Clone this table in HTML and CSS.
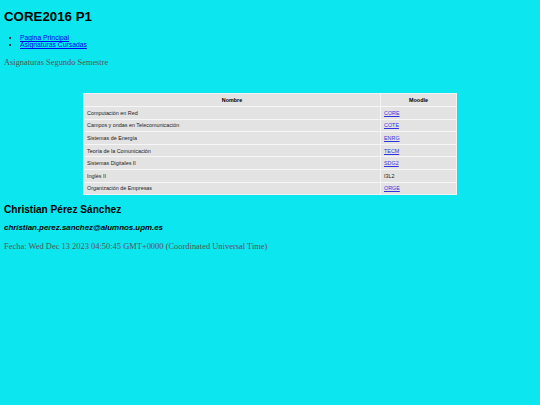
FILE: index.html
```html
<!DOCTYPE html>
<html>
<head>
<meta charset="utf-8">
<link rel="stylesheet" href="styles.css">
</head>
<body>
<h1 class="title">CORE2016 P1</h1>
<ul class="nav">
  <li><a href="#">Pagina Principal</a></li>
  <li><a href="#">Asignaturas Cursadas</a></li>
</ul>
<p class="sub">Asignaturas Segundo Semestre</p>
<table class="subjects">
  <thead>
    <tr><th class="c-name">Nombre</th><th class="c-moodle">Moodle</th></tr>
  </thead>
  <tbody>
    <tr><td>Computación en Red</td><td><a href="#">CORE</a></td></tr>
    <tr><td>Campos y ondas en Telecomunicación</td><td><a href="#">COTE</a></td></tr>
    <tr><td>Sistemas de Energía</td><td><a href="#">ENRG</a></td></tr>
    <tr><td>Teoría de la Comunicación</td><td><a href="#">TECM</a></td></tr>
    <tr><td>Sistemas Digitales II</td><td><a href="#">SDG2</a></td></tr>
    <tr><td>Inglés II</td><td>I3L2</td></tr>
    <tr><td>Organización de Empresas</td><td><a href="#">ORGE</a></td></tr>
  </tbody>
</table>
<h2 class="author">Christian Pérez Sánchez</h2>
<p class="email">christian.perez.sanchez@alumnos.upm.es</p>
<p class="date">Fecha: Wed Dec 13 2023 04:50:45 GMT+0000 (Coordinated Universal Time)</p>
</body>
</html>
```
FILE: styles.css
```css
html, body {
  margin: 0;
  padding: 0;
}
body {
  background: #0ce6ee;
  padding: 0 4px;
  font-family: "Liberation Sans", Arial, sans-serif;
  color: #000;
}
.title {
  font-size: 13.3px;
  font-weight: bold;
  margin: 0;
  padding-top: 10px;
  line-height: 14px;
}
.nav {
  margin: 10px 0 0 0;
  padding-left: 16px;
  font-size: 6.8px;
  line-height: 7px;
}
.nav a {
  color: #0000ee;
}
.sub {
  font-family: "Liberation Serif", "Times New Roman", serif;
  font-size: 8.4px;
  color: #555;
  margin: 10px 0 0 0;
  line-height: 10px;
}
.subjects {
  margin: 25px auto 0 auto;
  width: 374px;
  background: #e3e3e3;
  border: 1px solid #f2f2f2;
  border-spacing: 0;
  font-size: 5.4px;
}
.subjects th, .subjects td {
  border-bottom: 1px solid #f6f6f6;
  text-align: left;
  padding: 0 3px;
  height: 11.6px;
  color: #222;
}
.subjects th {
  text-align: center;
  font-weight: bold;
  color: #000;
  height: 12px;
}
.subjects tbody tr:last-child td {
  border-bottom: none;
}
.subjects td:first-child, .subjects th:first-child {
  border-right: 1px solid #f6f6f6;
}
.c-moodle {
  width: 69px;
}
.subjects a {
  color: #3333dd;
}
.author {
  font-size: 10.1px;
  font-weight: bold;
  margin: 9px 0 0 0;
  line-height: 12px;
}
.email {
  font-size: 7.9px;
  font-weight: bold;
  font-style: italic;
  margin: 7px 0 0 0;
  line-height: 10px;
}
.date {
  font-family: "Liberation Serif", "Times New Roman", serif;
  font-size: 8.45px;
  color: #555;
  margin: 8px 0 0 0;
  line-height: 10px;
}
```
